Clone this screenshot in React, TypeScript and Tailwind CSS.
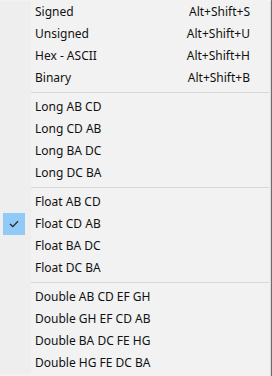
import React from "react";

interface Item {
  label: string;
  shortcut?: string;
  checked?: boolean;
}

const sections: Item[][] = [
  [
    { label: "Signed", shortcut: "Alt+Shift+S" },
    { label: "Unsigned", shortcut: "Alt+Shift+U" },
    { label: "Hex - ASCII", shortcut: "Alt+Shift+H" },
    { label: "Binary", shortcut: "Alt+Shift+B" },
  ],
  [{ label: "Long AB CD" }, { label: "Long CD AB" }, { label: "Long BA DC" }, { label: "Long DC BA" }],
  [
    { label: "Float AB CD" },
    { label: "Float CD AB", checked: true },
    { label: "Float BA DC" },
    { label: "Float DC BA" },
  ],
  [
    { label: "Double AB CD EF GH" },
    { label: "Double GH EF CD AB" },
    { label: "Double BA DC FE HG" },
    { label: "Double HG FE DC BA" },
  ],
];

function MenuRow({ item }: { item: Item }) {
  return (
    <div className="flex h-[22px] items-center">
      <div className="flex w-[31px] shrink-0 items-center justify-center self-stretch bg-[#eeeeee]">
        {item.checked && (
          <div className="ml-[-3px] flex h-[22px] w-[22px] items-center justify-center bg-[#91c9f7]">
            <svg width="10" height="8" viewBox="0 0 10 8" fill="none">
              <path d="M1 4 L3.8 6.6 L9 1.2" stroke="#2b2b2b" strokeWidth="1.3" />
            </svg>
          </div>
        )}
      </div>
      <span className="pl-[4px] text-[12px] text-[#111]">{item.label}</span>
      {item.shortcut && <span className="ml-auto pr-[20px] text-[12px] text-[#111]">{item.shortcut}</span>}
    </div>
  );
}

export default function App() {
  return (
    <div
      className="flex h-[376px] w-[272px] flex-col border-r border-r-[#6e6e6e] bg-[#f2f2f2] pt-px"
      style={{ fontFamily: '"Noto Sans", "Open Sans", sans-serif' }}
    >
      {/* menu body */}
      <div className="flex-1 border-r border-r-[#d9d9d9]">
        {sections.map((sec, i) => (
          <div key={i}>
            {i > 0 && (
              <div className="flex h-[7px]">
                <div className="w-[31px] bg-[#eeeeee]" />
                <div className="mr-[1px] mt-[3px] h-px flex-1 bg-[#d7d7d7]" />
              </div>
            )}
            {sec.map((item) => (
              <MenuRow key={item.label} item={item} />
            ))}
          </div>
        ))}
      </div>
    </div>
  );
}
